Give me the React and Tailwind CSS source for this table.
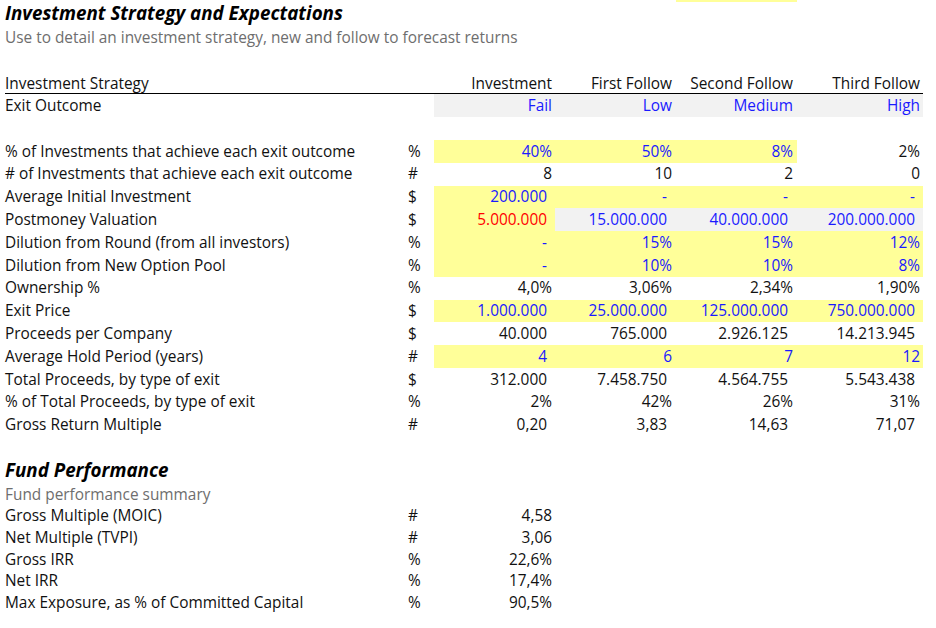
import React from "react";

const BLUE = "text-[#1a1aff]";
const RED = "text-[#ff0000]";
const BLACK = "text-[#111111]";

const colWidths = ["w-[121px]", "w-[121px]", "w-[121px]", "w-[126px]"];
const padNormal = ["pr-[3px]", "pr-[4px]", "pr-[4px]", "pr-[3px]"];
const padAcct = ["pr-[8px]", "pr-[9px]", "pr-[9px]", "pr-[8px]"];

// cell: [text, color, bg, acct]
const rows = [
  {
    label: "% of Investments that achieve each exit outcome",
    unit: "%",
    cells: [
      ["40%", BLUE, "y", false],
      ["50%", BLUE, "y", false],
      ["8%", BLUE, "y", false],
      ["2%", BLACK, "", false],
    ],
  },
  {
    label: "# of Investments that achieve each exit outcome",
    unit: "#",
    cells: [
      ["8", BLACK, "", false],
      ["10", BLACK, "", false],
      ["2", BLACK, "", false],
      ["0", BLACK, "", false],
    ],
  },
  {
    label: "Average Initial Investment",
    unit: "$",
    cells: [
      ["200.000", BLUE, "y", true],
      ["-", BLUE, "y", true],
      ["-", BLUE, "y", true],
      ["-", BLUE, "y", true],
    ],
  },
  {
    label: "Postmoney Valuation",
    unit: "$",
    cells: [
      ["5.000.000", RED, "y", true],
      ["15.000.000", BLUE, "g", true],
      ["40.000.000", BLUE, "g", true],
      ["200.000.000", BLUE, "g", true],
    ],
  },
  {
    label: "Dilution from Round (from all investors)",
    unit: "%",
    cells: [
      ["-", BLUE, "y", true],
      ["15%", BLUE, "y", false],
      ["15%", BLUE, "y", false],
      ["12%", BLUE, "y", false],
    ],
  },
  {
    label: "Dilution from New Option Pool",
    unit: "%",
    cells: [
      ["-", BLUE, "y", true],
      ["10%", BLUE, "y", false],
      ["10%", BLUE, "y", false],
      ["8%", BLUE, "y", false],
    ],
  },
  {
    label: "Ownership %",
    unit: "%",
    cells: [
      ["4,0%", BLACK, "", false],
      ["3,06%", BLACK, "", false],
      ["2,34%", BLACK, "", false],
      ["1,90%", BLACK, "", false],
    ],
  },
  {
    label: "Exit Price",
    unit: "$",
    cells: [
      ["1.000.000", BLUE, "y", true],
      ["25.000.000", BLUE, "y", true],
      ["125.000.000", BLUE, "y", true],
      ["750.000.000", BLUE, "y", true],
    ],
  },
  {
    label: "Proceeds per Company",
    unit: "$",
    cells: [
      ["40.000", BLACK, "", true],
      ["765.000", BLACK, "", true],
      ["2.926.125", BLACK, "", true],
      ["14.213.945", BLACK, "", true],
    ],
  },
  {
    label: "Average Hold Period (years)",
    unit: "#",
    cells: [
      ["4", BLUE, "y", true],
      ["6", BLUE, "y", false],
      ["7", BLUE, "y", false],
      ["12", BLUE, "y", false],
    ],
  },
  {
    label: "Total Proceeds, by type of exit",
    unit: "$",
    cells: [
      ["312.000", BLACK, "", true],
      ["7.458.750", BLACK, "", true],
      ["4.564.755", BLACK, "", true],
      ["5.543.438", BLACK, "", true],
    ],
  },
  {
    label: "% of Total Proceeds, by type of exit",
    unit: "%",
    cells: [
      ["2%", BLACK, "", false],
      ["42%", BLACK, "", false],
      ["26%", BLACK, "", false],
      ["31%", BLACK, "", false],
    ],
  },
  {
    label: "Gross Return Multiple",
    unit: "#",
    cells: [
      ["0,20", BLACK, "", true],
      ["3,83", BLACK, "", true],
      ["14,63", BLACK, "", true],
      ["71,07", BLACK, "", true],
    ],
  },
];

const fundRows = [
  ["Gross Multiple (MOIC)", "#", "4,58"],
  ["Net Multiple (TVPI)", "#", "3,06"],
  ["Gross IRR", "%", "22,6%"],
  ["Net IRR", "%", "17,4%"],
  ["Max Exposure, as % of Committed Capital", "%", "90,5%"],
];

function Cell({ text, color, bg, acct, i }) {
  const bgClass = bg === "y" ? "bg-[#ffff99]" : bg === "g" ? "bg-[#f2f2f2]" : "";
  return (
    <div
      className={`${colWidths[i]} ${acct ? padAcct[i] : padNormal[i]} ${bgClass} ${color} h-full flex items-center justify-end whitespace-nowrap`}
    >
      {text}
    </div>
  );
}

function Row({ label, unit, cells, h = "h-[22.8px]" }) {
  return (
    <div className={`flex ${h}`}>
      <div className={`w-[386px] flex items-center whitespace-nowrap ${BLACK}`}>{label}</div>
      <div className={`w-[43px] pl-[17px] flex items-center ${BLACK}`}>{unit}</div>
      {cells.map((c, i) => (
        <Cell key={i} i={i} text={c[0]} color={c[1]} bg={c[2]} acct={c[3]} />
      ))}
    </div>
  );
}

export default function App() {
  return (
    <div
      className="relative w-[936px] h-[628px] bg-white overflow-hidden text-[15.4px] leading-none"
      style={{ fontFamily: '"Open Sans", "Liberation Sans", sans-serif' }}
    >
      {/* yellow strip cut off at the top */}
      <div className="absolute left-[676px] top-0 w-[121px] h-[2px] bg-[#ffff99]" />

      <div className="pl-[5px] w-[923px]">
        <div className="h-[27px] flex items-center text-[18.8px] font-bold italic text-black">
          Investment Strategy and Expectations
        </div>
        <div className="h-[21px] flex items-center text-[#6e6e6e]">
          Use to detail an investment strategy, new and follow to forecast returns
        </div>
        <div className="h-[23px]" />

        <div className="flex h-[19px] pt-[3px] border-b border-black box-content">
          <div className={`w-[386px] flex items-center ${BLACK}`}>Investment Strategy</div>
          <div className="w-[43px]" />
          {["Investment", "First Follow", "Second Follow", "Third Follow"].map((t, i) => (
            <div
              key={t}
              className={`${colWidths[i]} ${padNormal[i]} flex items-center justify-end whitespace-nowrap ${BLACK}`}
            >
              {t}
            </div>
          ))}
        </div>

        <div className="flex h-[23px]">
          <div className={`w-[386px] flex items-center ${BLACK}`}>Exit Outcome</div>
          <div className="w-[43px]" />
          {["Fail", "Low", "Medium", "High"].map((t, i) => (
            <Cell key={t} i={i} text={t} color={BLUE} bg="g" acct={false} />
          ))}
        </div>

        <div className="h-[23px]" />

        {rows.map((r) => (
          <Row key={r.label} {...r} />
        ))}

        <div className="h-[20.5px]" />

        <div className="h-[28px] flex items-center text-[18.8px] font-bold italic text-black">
          Fund Performance
        </div>
        <div className="h-[20px] flex items-center text-[#6e6e6e]">
          Fund performance summary
        </div>
        {fundRows.map(([label, unit, v]) => (
          <div key={label} className="flex h-[21.8px]">
            <div className={`w-[386px] flex items-center whitespace-nowrap ${BLACK}`}>{label}</div>
            <div className={`w-[43px] pl-[17px] flex items-center ${BLACK}`}>{unit}</div>
            <div className={`w-[121px] pr-[3px] flex items-center justify-end ${BLACK}`}>{v}</div>
          </div>
        ))}
      </div>
    </div>
  );
}
